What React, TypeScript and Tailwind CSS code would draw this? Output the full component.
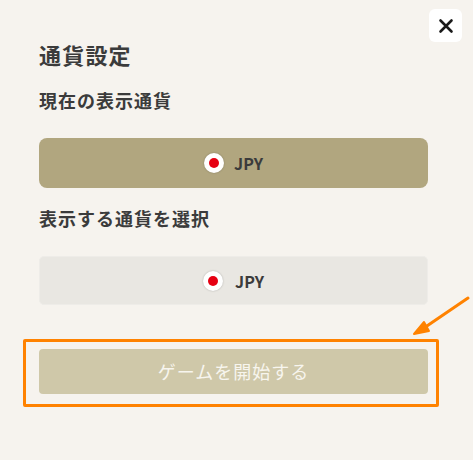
import React from "react";

function Flag() {
  return (
    <span className="flex h-[20px] w-[20px] items-center justify-center rounded-full bg-white shadow-[0_0_2px_rgba(0,0,0,0.25)]">
      <span className="h-[10px] w-[10px] rounded-full bg-[#e60012]" />
    </span>
  );
}

export default function App() {
  return (
    <div
      className="relative h-[460px] w-[473px] overflow-hidden bg-[#f6f3ee] text-[#3b3b3b]"
      style={{ fontFamily: '"Noto Sans CJK JP", "Noto Sans", sans-serif' }}
    >
      <button className="absolute right-[11px] top-[9px] flex h-[33px] w-[33px] items-center justify-center rounded-[6px] bg-white">
        <svg width="16" height="16" viewBox="0 0 16 16">
          <path d="M2.5 2.5 L13.5 13.5 M13.5 2.5 L2.5 13.5" stroke="#1a1a1a" strokeWidth="2.6" strokeLinecap="round" />
        </svg>
      </button>

      <div className="flex flex-col pl-[39px] pr-[45px] pt-[40px]">
        <h1 className="text-[22px] font-bold leading-[28px] tracking-[1.2px]">通貨設定</h1>
        <p className="mt-[20px] text-[18px] font-bold leading-[24px] tracking-[1px]">現在の表示通貨</p>
        <div className="mt-[26px] flex h-[50px] items-center justify-center gap-[10px] rounded-[8px] bg-[#b1a67f]">
          <Flag />
          <span className="text-[16px] font-bold">JPY</span>
        </div>
        <p className="mt-[18px] text-[18px] font-bold leading-[24px] tracking-[1px]">表示する通貨を選択</p>
        <div className="mt-[26px] flex h-[49px] items-center justify-center gap-[12px] rounded-[5px] border border-[#eeece8] bg-[#e9e7e2]">
          <Flag />
          <span className="text-[16px] font-bold">JPY</span>
        </div>
        <button className="mt-[44px] flex h-[45px] items-center justify-center rounded-[4px] bg-[#cfc8a9] text-[18px] tracking-[1px] text-[#f7f5ee]">
          ゲームを開始する
        </button>
      </div>

      <div className="absolute left-[23px] top-[339px] h-[68px] w-[416px] rounded-[2px] border-[3px] border-[#ff8200]" />
      <svg className="absolute left-0 top-0" width="473" height="460" viewBox="0 0 473 460">
        <path d="M468 298 L421 330" stroke="#ff8200" strokeWidth="3" strokeLinecap="round" />
        <path d="M414 334 L424 322 L429 331 Z" fill="#ff8200" stroke="#ff8200" strokeWidth="2" strokeLinejoin="round" />
      </svg>
    </div>
  );
}
